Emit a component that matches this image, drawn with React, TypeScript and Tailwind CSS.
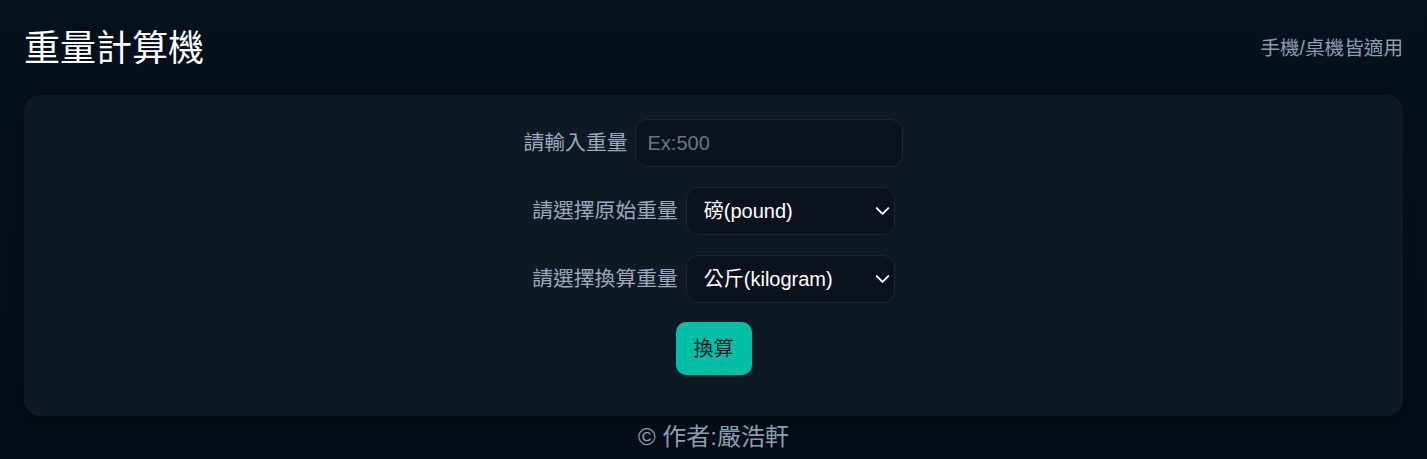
import { ChevronDown } from "lucide-react";

const font = "font-['Liberation_Sans','Noto_Sans_CJK_TC',sans-serif]";

function Row({ label, children }: { label: string; children: React.ReactNode }) {
  return (
    <div className="flex items-center justify-center gap-2">
      <label className="text-[20.8px] text-[#9aa9bb]">{label}</label>
      {children}
    </div>
  );
}

function UnitSelect({ value, options }: { value: string; options: string[] }) {
  return (
    <div className="relative">
      <select
        defaultValue={value}
        className="appearance-none w-[209px] h-12 pl-[17px] pr-10 rounded-xl bg-[#0b121e] border border-[#1c2634] text-white text-[20px] outline-none"
      >
        {options.map((o) => (
          <option key={o}>{o}</option>
        ))}
      </select>
      <ChevronDown
        className="pointer-events-none absolute right-[1px] top-1/2 -translate-y-1/2 w-[23px] h-[23px] text-white"
        strokeWidth={2}
      />
    </div>
  );
}

export default function App() {
  const units = ["公克(gram)", "公斤(kilogram)", "磅(pound)", "盎司(ounce)"];
  return (
    <div className={`${font} min-h-[459px] bg-gradient-to-b from-[#06111e] to-[#050c16] px-6`}>
      <header className="flex items-center justify-between h-[95px] pt-[2px]">
        <h1 className="text-[36px] text-white">重量計算機</h1>
        <span className="text-[19.6px] text-[#8b9cb0]">手機/桌機皆適用</span>
      </header>

      <main className="rounded-2xl bg-[#0f1926] shadow-[0_4px_16px_rgba(0,0,0,0.35)] pt-6 pb-[41px] flex flex-col gap-5">
        <Row label="請輸入重量">
          <input
            placeholder="Ex:500"
            className="w-[268px] h-12 pl-[11px] pr-3 rounded-xl bg-[#0b121e] border border-[#1c2634] text-white text-[20px] placeholder:text-[#6b7483] outline-none"
          />
        </Row>
        <Row label="請選擇原始重量">
          <UnitSelect value="磅(pound)" options={units} />
        </Row>
        <Row label="請選擇換算重量">
          <UnitSelect value="公斤(kilogram)" options={units} />
        </Row>
        <div className="flex justify-center -mt-[1px]">
          <button className="w-[76px] h-[53px] rounded-[10px] bg-[#00bfa5] text-[#0b1a22] text-[20px]">
            換算
          </button>
        </div>
      </main>

      <footer className="text-center text-[24px] text-[#8b9fb3] pt-[3px] pb-2">© 作者:嚴浩軒</footer>
    </div>
  );
}
